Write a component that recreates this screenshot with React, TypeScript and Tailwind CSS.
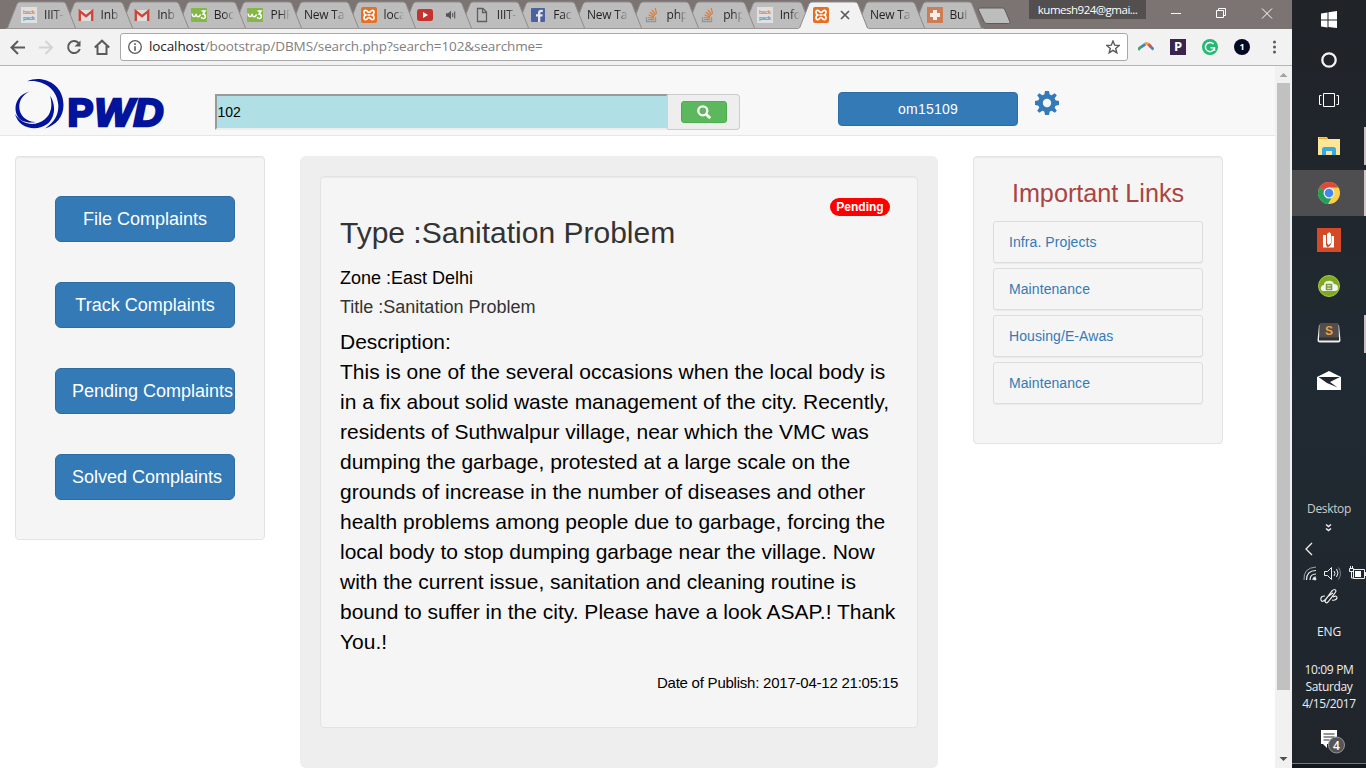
import React from "react";

type IconName = "backpack" | "gmail" | "w3" | "xampp" | "youtube" | "file" | "facebook" | "stack" | "medical" | "none";

const tabs: { icon: IconName; label: string; active?: boolean; sound?: boolean }[] = [
  { icon: "backpack", label: "IIIT-" },
  { icon: "gmail", label: "Inb" },
  { icon: "gmail", label: "Inb" },
  { icon: "w3", label: "Boc" },
  { icon: "w3", label: "PHP" },
  { icon: "none", label: "New Ta" },
  { icon: "xampp", label: "loca" },
  { icon: "youtube", label: "", sound: true },
  { icon: "file", label: "IIIT-" },
  { icon: "facebook", label: "Fac" },
  { icon: "none", label: "New Ta" },
  { icon: "stack", label: "php" },
  { icon: "stack", label: "php" },
  { icon: "backpack", label: "Info" },
  { icon: "xampp", label: "", active: true },
  { icon: "none", label: "New Ta" },
  { icon: "medical", label: "Bui" },
];

function Favicon({ name }: { name: IconName }) {
  const cls = "block h-4 w-4 shrink-0";
  switch (name) {
    case "backpack":
      return (
        <svg className={cls} viewBox="0 0 16 16">
          <rect width="16" height="16" fill="#e0e0e0" />
          <text x="2" y="7" fontSize="6" fontWeight="bold" fontFamily="Liberation Sans" fill="#d58a5c" textLength="12">back</text>
          <text x="2" y="12.5" fontSize="6" fontWeight="bold" fontFamily="Liberation Sans" fill="#6495bd" textLength="12">pack</text>
        </svg>
      );
    case "gmail":
      return (
        <svg className={cls} viewBox="0 0 16 16">
          <rect x="1" y="3" width="14" height="11" rx="1" fill="#dedede" />
          <path d="M1.8 14V4.2L8 9.2l6.2-5V14" fill="none" stroke="#cf4438" strokeWidth="2.3" />
        </svg>
      );
    case "w3":
      return (
        <svg className={cls} viewBox="0 0 16 16">
          <rect y="1" width="16" height="14" rx="1" fill="#84b748" />
          <path d="M1.200 6.500C1.200 10.500 5 10.500 5 6.800 5 10.500 8.500 10.500 9.500 7.500" fill="none" stroke="#fff" strokeWidth="1.500" />
          <path d="M10.500 4H14L12 7C15 7.200 15 11.500 12.500 11.500 11 11.500 10.500 11 10.200 10" fill="none" stroke="#fff" strokeWidth="1.500" />
        </svg>
      );
    case "xampp":
      return (
        <svg className={cls} viewBox="0 0 16 16">
          <rect width="16" height="16" rx="2" fill="#e66f24" />
          <path d="M5.200 3.500C3.500 3 2.800 4.100 3 5.500c.1 1.200.6 2 1.700 2.500-1.100.5-1.700 1.300-1.700 2.500-.1 1.400.6 2.500 2.200 2C6.500 12.200 6.600 10.500 8 10.500s1.500 1.700 2.800 2c1.600.5 2.300-.6 2.200-2 0-1.200-.6-2-1.700-2.500 1.100-.5 1.600-1.300 1.700-2.500.2-1.400-.6-2.500-2.200-2C9.500 3.800 9.400 5.500 8 5.500S6.500 3.800 5.200 3.500Z" fill="none" stroke="#fff" strokeWidth="1.7" />
          <path d="M6.500 8h3" stroke="#fff" strokeWidth="1.500" />
        </svg>
      );
    case "youtube":
      return (
        <svg className={cls} viewBox="0 0 16 16">
          <rect y="2" width="16" height="12" rx="2.500" fill="#c5332e" />
          <path d="m6 5 5 3-5 3Z" fill="#fff" />
        </svg>
      );
    case "file":
      return (
        <svg className={cls} viewBox="0 0 16 16">
          <path d="M3.500 1.500h5.500l3.500 3.500v9.500H3.500ZM8.500 1.500V5.500h4" fill="none" stroke="#5f5f5f" strokeWidth="1.300" />
        </svg>
      );
    case "facebook":
      return (
        <svg className={cls} viewBox="0 0 16 16">
          <rect x="1" y="1" width="14" height="14" rx="1" fill="#4b62a0" />
          <path d="M10.300 15V9.500h2.100l.3-2.200h-2.400V6q0-1.100 1.200-1.100h1.300V2.800Q8 2.200 8 5.600v1.700H6v2.200h2V15Z" fill="#e6e6e6" />
        </svg>
      );
    case "stack":
      return (
        <svg className={cls} viewBox="0 0 16 16">
          <path d="M2.500 10v4.500h9V10" fill="none" stroke="#969696" strokeWidth="1.300" />
          <path d="M4 12.500h6M4 10.500l6 .6M4.500 8l5.700 1.900M5.700 5.200l5 3.500M8 2.800l3.600 5M11.300 1l1.200 6" stroke="#de7b35" strokeWidth="1.200" />
        </svg>
      );
    case "medical":
      return (
        <svg className={cls} viewBox="0 0 16 16">
          <rect width="16" height="16" fill="#ce7c55" />
          <path d="M6 3h4v3h3v4h-3v3H6v-3H3V6h3Z" fill="#f3eeea" />
        </svg>
      );
    default:
      return null;
  }
}

function TabStrip() {
  return (
    <div className="flex h-[29px] shrink-0 bg-[#7c7373] pl-[6px]">
      {tabs.map((tab, i) => (
        <div
          key={i}
          className="relative h-full w-[56.6px] shrink-0"
          style={{ zIndex: tab.active ? 40 : 30 - i }}
        >
          <svg className="absolute top-0 left-0 h-[29px] w-[72px]" viewBox="0 0 72 29">
            <path
              d="M0 29 1.500 28 11 4Q12 2 14 2H57Q59 2 60 4L69 28 71 29Z"
              fill={tab.active ? "#f2f2f2" : "#bdbdbd"}
            />
            <path d="M1.500 28 11 4Q12 2 14 2H57Q59 2 60 4L69.500 28" fill="none" stroke="#908b8b" strokeWidth="1" />
            {!tab.active && <path d="M0 28.500H72" stroke="#999595" />}
          </svg>
          <div className="relative flex h-[29px] w-[58px] items-center pl-[15px]">
            <Favicon name={tab.icon} />
            {tab.label && (
              <span
                className={
                  tab.icon === "none"
                    ? "block w-[42px] bg-gradient-to-r from-[#222] from-70% to-transparent bg-clip-text font-['Open_Sans',sans-serif] text-[12px] tracking-[-0.2px] whitespace-nowrap text-transparent"
                    : "ml-[7px] block w-[20px] bg-gradient-to-r from-[#222] from-50% to-transparent bg-clip-text font-['Open_Sans',sans-serif] text-[12px] tracking-[-0.2px] whitespace-nowrap text-transparent"
                }
              >
                {tab.label}
              </span>
            )}
            {tab.sound && (
              <svg className="ml-[13px] h-3 w-3 shrink-0" viewBox="0 0 12 12">
                <path d="M0 4.300h2L5 1.700v8.600L2 7.700H0Z" fill="#555" />
                <path d="M6.700 4v4M8.700 2.500v7" stroke="#555" strokeWidth="1.100" />
              </svg>
            )}
            {tab.active && (
              <svg className="ml-[12px] h-2 w-2 shrink-0 overflow-visible" viewBox="0 0 8 8">
                <path d="m0 0 8 8M8 0 0 8" stroke="#5a5a5a" strokeWidth="1.700" />
              </svg>
            )}
          </div>
        </div>
      ))}
      <svg className="ml-[9px] h-[29px] w-[36px] shrink-0" viewBox="0 0 36 29">
        <path d="M3 8H25.500Q27 8 28 10L33 22Q33.500 23.500 31.500 23.500H10Q8 23.500 7.300 22L1.500 10Q1 8 3 8Z" fill="#bdbdbd" stroke="#605a5a" />
      </svg>
      <div className="ml-[16px] flex h-[19px] w-[117px] shrink-0 items-center justify-center bg-[#544f4f] font-['Open_Sans',sans-serif] text-[11.500px] tracking-[-0.500px] text-white">
        kumesh924@gmai...
      </div>
      <svg className="ml-[25px] h-[26px] w-[102px] shrink-0" viewBox="0 0 102 26" fill="none" stroke="#fff">
        <path d="M0 13.500h10M45.500 10.500h7v7h-7zM47.500 10v-1.500h7v7H53M91 8.500l10 10M101 8.500l-10 10" />
      </svg>
    </div>
  );
}

function Toolbar() {
  return (
    <div className="flex h-[37px] shrink-0 items-center border-b border-[#b6b4b6] bg-[#f2f2f2] pb-[1px]">
      <svg className="h-[36px] w-[120px] shrink-0" viewBox="0 0 120 36" fill="none" strokeWidth="2">
        <path d="M25 18.500H12M18 12l-6.500 6.500L18 25" stroke="#5a5a5a" />
        <path d="M39 18.500h12.500M45.500 12l6.500 6.500-6.500 6.500" stroke="#d3d3d3" />
        <path d="M78.500 14A6 6 0 1 0 79.800 20" stroke="#5a5a5a" />
        <path d="M80.500 11.500v6h-6Z" fill="#5a5a5a" />
        <path d="M94.800 18.500 102 11.700l7.200 6.800M97.500 17v8h9v-8" stroke="#5a5a5a" />
      </svg>
      <div className="flex h-[28px] w-[1008px] shrink-0 items-center rounded-[3px] border border-[#a8a8a8] bg-white pr-[7px] pl-[7px]">
        <svg className="h-[14px] w-[14px] shrink-0" viewBox="0 0 14 14" fill="none" stroke="#5a5a5a">
          <circle cx="7" cy="7" r="6.300" strokeWidth="1.300" />
          <path d="M7 6.200v4.500M7 3.300v1.700" strokeWidth="1.600" />
        </svg>
        <span className="ml-[7px] font-['Open_Sans',sans-serif] text-[13.500px] tracking-[-0.100px] whitespace-nowrap text-[#808080]">
          <span className="text-[#222]">localhost</span>/bootstrap/DBMS/search.php?search=102&amp;searchme=
        </span>
        <svg className="ml-auto h-[14px] w-[14px] shrink-0" viewBox="0 0 14 14">
          <path d="m7 1 1.700 4.200 4.500.3-3.500 2.900 1.100 4.400L7 10.300l-3.800 2.500 1.100-4.400L.8 5.500l4.500-.3Z" fill="none" stroke="#5a5a5a" strokeWidth="1.400" />
        </svg>
      </div>
      <svg className="ml-[10px] h-[16px] w-[16px] shrink-0" viewBox="0 0 16 16" fill="none" strokeWidth="2.800">
        <path d="M0 11Q1.500 8.500 4 7.500" stroke="#46a365" /><path d="M3.500 7.800 7.500 5" stroke="#4d83bd" /><path d="M7 5.200Q9 3.500 11 5.800" stroke="#e5a83b" /><path d="M10.500 5.200 13 8" stroke="#db5147" /><path d="M12.500 7.500 15.500 10.500" stroke="#4d83bd" />
      </svg>
      <div className="ml-[16px] flex h-4 w-4 shrink-0 items-center justify-center bg-[#3b254c] font-['Open_Sans',sans-serif] text-[13px] leading-none font-bold text-white">P</div>
      <svg className="ml-[16px] h-4 w-4 shrink-0" viewBox="0 0 16 16">
        <circle cx="8" cy="8" r="8" fill="#22b973" />
        <path d="M11.500 5A4.600 4.600 0 1 0 12.500 9M8.500 8.700h4v3" fill="none" stroke="#fff" strokeWidth="1.500" />
      </svg>
      <div className="ml-[16px] flex h-4 w-4 shrink-0 items-center justify-center rounded-full bg-[#050a24] font-['Open_Sans',sans-serif] text-[9px] font-bold text-white">1</div>
      <svg className="ml-[22px] h-4 w-[6px] shrink-0" viewBox="0 0 6 16" fill="#5a5a5a">
        <circle cx="2.500" cy="3" r="1.500" /><circle cx="2.500" cy="8" r="1.500" /><circle cx="2.500" cy="13" r="1.500" />
      </svg>
    </div>
  );
}

function Logo() {
  return (
    <svg className="h-[52px] w-[150px] shrink-0" viewBox="0 0 150 52">
      <g fill="#02149b">
        <path d="M12 3.200C28-3.500 48.500 6 48.500 27 48.500 39 41 47 30 50.500 40 44 43.800 36 43.300 27 42.500 11 28 1 12 3.200Z" />
        <path d="M14.500 13.500C-3 18-3 39 8.500 43.300 13 45 17 44.800 20.500 44 11 44 4.300 37 4.300 29 4.300 22 8 16.500 14.500 13.500Z" />
        <path d="M0 36C4 51 22 54 33 45.500 41 38.500 40.500 25 35 17.500 38 28 36 36.500 29.500 41.500 20 49 7 47 0 36Z" />
      </g>
      <g fontFamily="Liberation Sans, sans-serif" fontSize="39" fontWeight="bold" fill="#02149b" stroke="#02149b" strokeWidth="2.6">
        <text x="52.500" y="48" textLength="26" lengthAdjust="spacingAndGlyphs">P</text>
        <text x="79.500" y="48" fontStyle="italic" textLength="39" lengthAdjust="spacingAndGlyphs">W</text>
        <text x="118.500" y="48" fontStyle="italic" textLength="30" lengthAdjust="spacingAndGlyphs">D</text>
      </g>
    </svg>
  );
}

function Navbar() {
  return (
    <header className="flex h-[70px] shrink-0 items-start border-b border-[#e7e7e7] bg-[#f8f8f8] pl-[15px]">
      <div className="mt-[12px]"><Logo /></div>
      <div className="mt-[28px] ml-[50px] flex h-[36px]">
        <div className="flex h-[36px] w-[453px] items-center border-2 border-t-[#9a9a9a] border-r-[#b0e0e6] border-b-[#eee] border-l-[#9a9a9a] bg-[#b0e0e6] pl-[0.5px] text-[14px] text-black">102</div>
        <div className="flex h-[36px] w-[72px] items-center justify-center rounded-r-[4px] border border-l-0 border-[#ccc] bg-[#eee]">
          <button className="flex h-[22px] w-[46px] items-center justify-center rounded-[3px] border border-[#4cae4c] bg-[#5cb85c]">
            <svg className="h-[14px] w-[14px]" viewBox="0 0 14 14" fill="none" stroke="#fff">
              <circle cx="5.800" cy="5.800" r="4.500" strokeWidth="2.300" />
              <path d="m9.200 9.200 4 4" strokeWidth="2.700" />
            </svg>
          </button>
        </div>
      </div>
      <button className="mt-[26px] ml-[98px] h-[34px] w-[180px] rounded-[4px] border border-[#2e6da4] bg-[#337ab7] text-[14px] tracking-[0.2px] text-white">om15109</button>
      <svg className="mt-[25px] ml-[17px] h-[24px] w-[24px]" viewBox="0 0 24 24">
        <path fill="#337ab7" fillRule="evenodd" d="M10 0h4l.7 3.500 2 .8L19.700 2.200 21.800 4.300 19.700 7.300l.8 2L24 10v4l-3.500.7-.8 2 2.100 3-2.100 2.100-3-2.100-2 .8L14 24h-4l-.7-3.500-2-.8-3 2.100-2.100-2.100 2.100-3-.8-2L0 14v-4l3.500-.7.8-2L2.200 4.300 4.300 2.200l3 2.100 2-.8ZM12 7.800a4.200 4.200 0 1 0 0 8.400 4.200 4.200 0 0 0 0-8.400Z" />
      </svg>
    </header>
  );
}

const sideButtons = ["File Complaints", "Track Complaints", "Pending Complaints", "Solved Complaints"];
const links = ["Infra. Projects", "Maintenance", "Housing/E-Awas", "Maintenance"];
const description = [
  "This is one of the several occasions when the local body is",
  "in a fix about solid waste management of the city. Recently,",
  "residents of Suthwalpur village, near which the VMC was",
  "dumping the garbage, protested at a large scale on the",
  "grounds of increase in the number of diseases and other",
  "health problems among people due to garbage, forcing the",
  "local body to stop dumping garbage near the village. Now",
  "with the current issue, sanitation and cleaning routine is",
  "bound to suffer in the city. Please have a look ASAP.! Thank",
  "You.!",
];

function PageContent() {
  return (
    <main className="flex flex-1 items-start bg-white pt-[20px] pl-[15px]">
      <aside className="flex h-[384px] w-[250px] shrink-0 flex-col gap-[40px] rounded-[4px] border border-[#e3e3e3] bg-[#f5f5f5] px-[39px] pt-[39px] shadow-[inset_0_1px_1px_rgba(0,0,0,0.05)]">
        {sideButtons.map((label) => (
          <button key={label} className="h-[46px] w-[180px] shrink-0 rounded-[6px] border border-[#2e6da4] bg-[#337ab7] px-[16px] text-center text-[18px] whitespace-nowrap text-white">
            {label}
          </button>
        ))}
      </aside>
      <section className="ml-[35px] h-[612px] w-[638px] shrink-0 rounded-[6px] bg-[#eee] p-[20px]">
        <article className="flex h-[552px] flex-col rounded-[4px] border border-[#e3e3e3] bg-[#f5f5f5] px-[19px] pt-[21px] shadow-[inset_0_1px_1px_rgba(0,0,0,0.05)]">
          <span className="mr-[8px] flex h-[18px] w-[60px] items-center justify-center self-end rounded-full bg-[red] text-[12px] font-bold text-white">Pending</span>
          <h2 className="text-[30px] leading-[33px] whitespace-nowrap text-[#333]">Type :Sanitation Problem</h2>
          <p className="mt-[19px] text-[18px] leading-[20px] text-black">Zone :East Delhi</p>
          <p className="mt-[9px] text-[18px] leading-[20px] text-[#333]">Title :Sanitation Problem</p>
          <div className="mt-[10px] text-[21px] leading-[30px] whitespace-nowrap text-black">
            <p>Description:</p>
            {description.map((line) => <p key={line}>{line}</p>)}
          </div>
          <p className="mt-[15px] text-right text-[15px] leading-[21px] tracking-[-0.230px] text-black">Date of Publish: 2017-04-12 21:05:15</p>
        </article>
      </section>
      <aside className="ml-[35px] h-[288px] w-[250px] shrink-0 rounded-[4px] border border-[#e3e3e3] bg-[#f5f5f5] px-[19px] pt-[22px] shadow-[inset_0_1px_1px_rgba(0,0,0,0.05)]">
        <h3 className="text-center text-[25.200px] leading-[28px] whitespace-nowrap text-[#a94442]">Important Links</h3>
        <nav className="mt-[14px] flex flex-col gap-[5px]">
          {links.map((label, i) => (
            <a key={i} className="flex h-[42px] items-center rounded-[3px] border border-[#ddd] pl-[15px] text-[14px] tracking-[0.080px] text-[#337ab7] shadow-[0_1px_1px_rgba(0,0,0,0.05)]">{label}</a>
          ))}
        </nav>
      </aside>
    </main>
  );
}

function Scrollbar() {
  return (
    <div className="flex h-full w-[17px] shrink-0 flex-col items-center bg-[#f1f1f1]">
      <svg className="h-[17px] w-[17px] shrink-0" viewBox="0 0 17 17"><path d="M4.500 11 8.500 7l4 4Z" fill="#a3a3a3" /></svg>
      <div className="h-[607px] w-[13px] shrink-0 bg-[#c1c1c1]" />
      <svg className="mt-auto h-[17px] w-[17px] shrink-0" viewBox="0 0 17 17"><path d="m4.500 6 4 4 4-4Z" fill="#505050" /></svg>
    </div>
  );
}

function Taskbar() {
  return (
    <aside className="flex h-[768px] w-[74px] shrink-0 flex-col items-center bg-gradient-to-b from-[#202328] via-[#202a33] to-[#20252b] font-['Open_Sans',sans-serif] text-[12px] text-[#eee]">
      <svg className="h-[170px] w-[74px] shrink-0" viewBox="0 0 74 170">
        <path d="m29 13.500 6.500-1V19.500H29ZM36.500 12.300 45 11v8.500h-8.500ZM29 20.500h6.500v7l-6.500-1ZM36.500 20.500H45V28l-8.500-1Z" fill="#fff" />
        <circle cx="37" cy="60" r="6.700" fill="none" stroke="#f4f4f4" strokeWidth="2.300" />
        <path d="M31.500 93.500h11v13h-11zM29.500 95.500h-2v9h2M44.500 95.500h2v9h-2" fill="none" stroke="#fff" />
        <path d="M26 137h9l1 2h12v16H26Z" fill="#ffe596" /><path d="M27 137.500h8v1.500h-8Z" fill="#e9ad2c" />
        <path d="M30 155v-5.500q0-2.500 2.500-2.500h9q2.500 0 2.500 2.500v5.500h-4v-4h-6v4Z" fill="#36a9e1" />
        <path d="M72 127h2v38h-2Z" fill="#cbbfc2" />
      </svg>
      <div className="flex h-[46px] w-full items-center justify-center border-r-2 border-[#d1c7c9] bg-[#4e4e51] pl-[2px]">
        <svg className="h-[24px] w-[24px]" viewBox="0 0 24 24">
          <circle cx="12" cy="12" r="11" fill="#fbd049" />
          <path d="M12 12 2.500 6.500A11 11 0 0 1 21.600 6.600H12Z" fill="#da4b3e" />
          <path d="m12 12-9.500-5.500A11 11 0 0 0 11 23l5.200-9Z" fill="#249e5a" />
          <circle cx="12" cy="12" r="5.500" fill="#f1f1f1" /><circle cx="12" cy="12" r="4.300" fill="#4285f4" />
        </svg>
      </div>
      <svg className="h-[190px] w-[74px] shrink-0" viewBox="0 0 74 190">
        <path d="M25 12h24v24H25Z" fill="#d44a27" />
        <path d="M31 19h3v10l1.500 2.500H31ZM35 18l2.500-2 1.500 2v9l-2.500 2-1.500-2ZM39.500 20H42v11.500h-7q5-1.500 4.500-7Z" fill="#fff" />
        <circle cx="37" cy="70" r="10.500" fill="#80a922" stroke="#aac947" />
        <path d="M31 75q-3-1-2-4 1-2 3-2 0-4 4-4 4-1 6 3 4 0 4 4 0 3-3 3Z" fill="#f1f4e9" />
        <path d="M34.500 68.500h5v5h-5zM34.500 71h5" fill="none" stroke="#7c9844" strokeWidth="1.500" />
        <path d="M27 109 25.500 124Q25.500 126.500 28 126.500H46Q48.500 126.500 48.500 124L47 109Z" fill="#eee" />
        <path d="M28.500 107H45.500Q46.500 107 46.500 108L47 124H27L27.500 108Q27.500 107 28.500 107Z" fill="#504d4b" /><path d="M27 121.500h20v3H27Z" fill="#303030" />
        <text x="33" y="119" fill="#eca045" fontFamily="Liberation Sans" fontSize="12" fontWeight="bold">S</text>
        <path d="m25 161 12-6 12 6v13H25Z" fill="#fff" /><path d="M26.500 161H48L38 166l7.500 5.500L35 167Z" fill="#20272e" />
        <path d="M72 99h2v38h-2Z" fill="#cbbfc2" />
      </svg>
      <div className="mt-[94px] h-[18px] leading-[18px] tracking-[-0.350px] text-[#ccc]">Desktop</div>
      <svg className="h-[96px] w-[74px] shrink-0" viewBox="0 0 74 96" fill="none" stroke="#f0f0f0">
        <path d="m34 6.500 2.500 2 2.500-2M34 10.500l2.500 2 2.500-2" strokeWidth="1.500" />
        <path d="m20 25-6 6 6 6" strokeWidth="1.300" />
        <g transform="translate(-5 0)">
          <path d="M19.500 62q0-9.500 9.500-9.500M23 62q0-6 6-6M26 62q0-3 3-3" strokeWidth="1.200" /><path d="M17 62q-1-12 12-13" stroke="#a0a6ad" /><circle cx="28" cy="61" r="1" fill="white" />
        </g>
        <path d="M32.500 53.500h3l4-4v12l-4-4h-3ZM42 53q2 2.500 0 5M44.500 51q3 4 0 8" /><path d="M46.500 49.500q4 6 0 12" stroke="#7c828a" />
        <path d="M61.500 51.500h11v9h-11zM73.500 54v4M57.500 50.500v3h4v-3ZM59.500 53v7h2M58.500 48v2M60.500 48v2" /><path d="M63 53h6v6h-6Z" fill="#fff" stroke="none" />
        <path d="M33 78q-5 0-4 4 1 3 5-1l6-8q3-3 4 0 0 1-8 11-2 2-3-1 1-4 8-8M41 79q4-2 4 1-1 3-5 2" strokeWidth="1.200" />
      </svg>
      <div className="mt-[9px] h-[18px] leading-[18px] tracking-[-0.2px]">ENG</div>
      <div className="mt-[20px] w-full text-center leading-[17px] tracking-[-0.350px] whitespace-nowrap">
        <p>10:09 PM</p><p>Saturday</p><p>4/15/2017</p>
      </div>
      <svg className="mt-[16px] h-[32px] w-[74px] shrink-0" viewBox="0 0 74 32">
        <path d="M29 2h16v14H35v4l-4-4h-2Z" fill="#fff" /><path d="M31.500 6h11M31.500 9h11M31.500 12h6" stroke="#292d32" />
        <circle cx="44.500" cy="17" r="8" fill="#535557" stroke="#969696" />
        <text x="41" y="21.500" fontFamily="Open Sans" fontSize="12" fontWeight="600" fill="#fff">4</text>
      </svg>
      <div className="mt-auto h-[5px] w-full border-t border-[#74777a] bg-[#13171b]" />
    </aside>
  );
}

export default function App() {
  return (
    <div className="flex h-[768px] w-[1366px] overflow-hidden bg-white font-['Liberation_Sans',Arial,sans-serif]">
      <div className="flex h-full w-[1292px] shrink-0 flex-col">
        <TabStrip />
        <Toolbar />
        <div className="flex min-h-0 flex-1">
          <div className="flex w-[1275px] shrink-0 flex-col"><Navbar /><PageContent /></div>
          <Scrollbar />
        </div>
      </div>
      <Taskbar />
    </div>
  );
}
